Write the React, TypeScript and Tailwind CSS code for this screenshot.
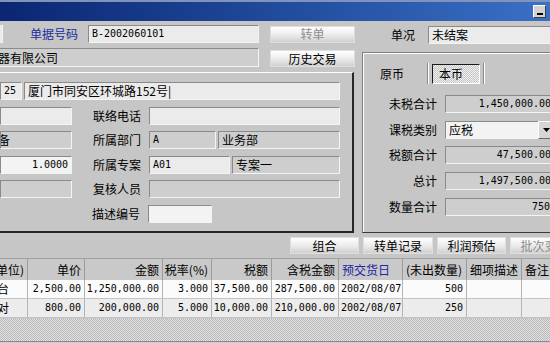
import { FC, ReactNode } from "react";

const MONO = "font-['DejaVu_Sans_Mono','Noto_Sans_CJK_SC',monospace] text-[10px]";

// 输入框颜色
const tones = {
  light: "bg-[#ebebeb]",
  gray: "bg-[#cecece]",
  white: "bg-[#f3f3f3]",
};

type FieldProps = {
  w: string;
  tone?: "light" | "gray" | "white";
  right?: boolean;
  mono?: boolean;
  children?: ReactNode;
};

const Field: FC<FieldProps> = ({ w, tone = "light", right, mono, children }) => (
  <div
    className={`${w} h-[18px] shrink-0 flex items-center overflow-hidden whitespace-nowrap border border-t-[#8a8a8a] border-l-[#8a8a8a] border-b-[#f4f4f4] border-r-[#f4f4f4] ${tones[tone]} ${right ? "justify-end pr-[3px]" : "pl-[3px]"} ${mono ? MONO : ""}`}
  >
    {children}
  </div>
);

const Btn: FC<{ w: string; disabled?: boolean; children: ReactNode }> = ({ w, disabled, children }) => (
  <div
    className={`${w} h-[17px] shrink-0 flex items-center justify-center bg-linear-to-b from-[#ffffff] via-[#ececec] to-[#d0d0d0] border border-[#dedede] ${disabled ? "text-[#8e8e8e]" : "text-black"}`}
  >
    {children}
  </div>
);

const Label: FC<{ w: string; children: ReactNode }> = ({ w, children }) => (
  <div className={`${w} shrink-0 text-right pr-[8px] whitespace-nowrap`}>{children}</div>
);

const cols = [
  { w: "w-[28px]", head: "(单位)", hr: true, br: false },
  { w: "w-[57px]", head: "单价", hr: true, br: true },
  { w: "w-[78px]", head: "金额", hr: true, br: true },
  { w: "w-[49px]", head: "税率(%)", hr: true, br: true },
  { w: "w-[60px]", head: "税额", hr: true, br: true },
  { w: "w-[67px]", head: "含税金额", hr: true, br: true },
  { w: "w-[64px]", head: "预交货日", hr: false, br: false },
  { w: "w-[64px]", head: "(未出数量)", hr: false, br: true },
  { w: "w-[55px]", head: "细项描述", hr: false, br: false },
  { w: "w-[40px]", head: "备注", hr: false, br: false },
];

const rows = [
  ["台", "2,500.00", "1,250,000.00", "3.000", "37,500.00", "287,500.00", "2002/08/07", "500", "", ""],
  ["对", "800.00", "200,000.00", "5.000", "10,000.00", "210,000.00", "2002/08/07", "250", "", ""],
];

export default function App() {
  return (
    <div className="w-[550px] h-[343px] overflow-hidden bg-[#c6c6c6] font-['Noto_Sans_CJK_SC',sans-serif] text-[12px] leading-none text-black flex flex-col">
      {/* 标题栏 */}
      <div className="h-[21px] shrink-0 border-t-2 border-[#8193bb] bg-linear-to-r from-[#0b2672] to-[#3a70c6] flex items-center justify-end pr-[4px]">
        <div className="w-[13px] h-[13px] bg-[#d2d2d2] border border-t-white border-l-white border-b-[#404040] border-r-[#404040] flex items-end pl-[3px] pb-[2px]">
          <div className="w-[6px] h-[2px] bg-black" />
        </div>
      </div>

      <div className="flex mt-[4px] shrink-0">
        {/* 左侧 */}
        <div className="w-[356px] shrink-0 flex flex-col">
          <div className="flex items-center h-[18px]">
            <div className="w-[3px] h-[18px] border-r border-b border-[#f4f4f4] bg-[#ebebeb]" />
            <div className="w-[85px] text-right pr-[10px] text-[#1b2b9e]">单据号码</div>
            <Field w="w-[171px]" mono>B-2002060101</Field>
            <div className="ml-[11px]">
              <Btn w="w-[85px]" disabled>转单</Btn>
            </div>
          </div>
          <div className="flex items-start mt-[5px] h-[19px]">
            <div className="w-[259px] h-[19px] flex items-center overflow-hidden whitespace-nowrap border border-t-[#8a8a8a] border-b-[#f4f4f4] border-r-[#f4f4f4] border-l-0 bg-[#cecece]">
              <span className="-ml-[2px]">器有限公司</span>
            </div>
            <div className="ml-[11px] mt-[2px]">
              <Btn w="w-[85px]">历史交易</Btn>
            </div>
          </div>

          <div className="mt-[5px] h-[161px] w-[354px] border-t border-t-white border-r-2 border-b-2 border-r-[#262626] border-b-[#262626] pt-[9px] flex flex-col gap-[6.6px]">
            <div className="flex items-center h-[18px]">
              <Field w="w-[22px]" mono>25</Field>
              <div className="ml-[2px]">
                <Field w="w-[316px]">厦门市同安区环城路152号|</Field>
              </div>
            </div>
            <div className="flex items-center h-[18px]">
              <Field w="w-[72px]" />
              <Label w="w-[77px]">联络电话</Label>
              <Field w="w-[191px]" />
            </div>
            <div className="flex items-center h-[18px]">
              <Field w="w-[72px]" tone="gray">
                <span className="-ml-[6px]">备</span>
              </Field>
              <Label w="w-[77px]">所属部门</Label>
              <Field w="w-[67px]" tone="gray" mono>A</Field>
              <div className="ml-[2px]">
                <Field w="w-[122px]" tone="gray">业务部</Field>
              </div>
            </div>
            <div className="flex items-center h-[18px]">
              <Field w="w-[72px]" tone="white" right mono>1.0000</Field>
              <Label w="w-[77px]">所属专案</Label>
              <Field w="w-[81px]" mono>A01</Field>
              <div className="ml-[2px]">
                <Field w="w-[108px]" tone="gray">专案一</Field>
              </div>
            </div>
            <div className="flex items-center h-[18px]">
              <Field w="w-[72px]" tone="gray" />
              <Label w="w-[77px]">复核人员</Label>
              <Field w="w-[191px]" tone="gray" />
            </div>
            <div className="flex items-center h-[18px]">
              <div className="w-[72px]" />
              <Label w="w-[76px]">描述编号</Label>
              <Field w="w-[64px]" tone="white" />
            </div>
          </div>
        </div>

        {/* 右侧 */}
        <div className="ml-[6px] w-[200px] shrink-0 flex flex-col">
          <div className="flex items-center h-[18px] mt-[1px]">
            <div className="w-[66px] text-right pr-[13px]">单况</div>
            <Field w="w-[130px]">未结案</Field>
          </div>
          <div className="mt-[8px] h-[181px] border-t border-l border-[#7e7e7e] border-b border-b-[#3a3a3a] shadow-[inset_1px_1px_0_#ffffff] pt-[10px]">
            <div className="flex items-center h-[21px] pl-[17px]">
              <div className="w-[24px]">原币</div>
              <div className="ml-[23px] w-[2px] h-[21px] border-l border-l-[#8a8a8a] border-r border-r-white" />
              <div className="ml-[3px] w-[48px] h-[20px] flex items-center pl-[6px] border border-t-[#1a1a1a] border-l-[#1a1a1a] border-b-white border-r-white bg-[image:repeating-conic-gradient(#c4c4c4_0%_25%,#f2f2f2_0%_50%)] bg-size-[2px_2px]">
                本币
              </div>
              <div className="ml-[3px] w-[2px] h-[21px] border-l border-l-[#8a8a8a] border-r border-r-white" />
            </div>
            <div className="mt-[11px] flex flex-col gap-[7.7px]">
              <div className="flex items-center h-[18px]">
                <Label w="w-[82px]">未税合计</Label>
                <Field w="w-[110px]" tone="gray" right mono>1,450,000.00</Field>
              </div>
              <div className="flex items-center h-[18px]">
                <Label w="w-[82px]">课税类别</Label>
                <div className="w-[93px] h-[18px] flex items-center pl-[3px] border border-t-[#8a8a8a] border-l-[#8a8a8a] border-b-[#f4f4f4] border-r-0 bg-[#f3f3f3]">
                  应税
                </div>
                <div className="w-[17px] h-[18px] flex items-center justify-center bg-[#d6d6d6] border border-t-white border-l-white border-b-[#6a6a6a] border-r-[#6a6a6a]">
                  <svg width="7" height="4" viewBox="0 0 7 4">
                    <path d="M0 0h7L3.5 4z" fill="#000" />
                  </svg>
                </div>
              </div>
              <div className="flex items-center h-[18px]">
                <Label w="w-[82px]">税额合计</Label>
                <Field w="w-[110px]" tone="gray" right mono>47,500.00</Field>
              </div>
              <div className="flex items-center h-[18px]">
                <Label w="w-[82px]">总计</Label>
                <Field w="w-[110px]" tone="gray" right mono>1,497,500.00</Field>
              </div>
              <div className="flex items-center h-[18px]">
                <Label w="w-[82px]">数量合计</Label>
                <Field w="w-[109px]" tone="gray" right mono>750</Field>
              </div>
            </div>
          </div>
        </div>
      </div>

      {/* 按钮 */}
      <div className="flex gap-[4px] pl-[290px] mt-[4px] shrink-0">
        <Btn w="w-[69px]">组合</Btn>
        <Btn w="w-[70px]">转单记录</Btn>
        <Btn w="w-[69px]">利润预估</Btn>
        <Btn w="w-[69px]" disabled>批次变更</Btn>
      </div>

      {/* 明细 */}
      <div className="mt-[4px] flex flex-col flex-1 w-[600px]">
        <div className="flex h-[22px] shrink-0 border-t border-[#a0a0a0] bg-[#c9c9c9]">
          {cols.map((c, i) => (
            <div
              key={i}
              className={`${c.w} shrink-0 h-full flex items-center overflow-hidden whitespace-nowrap border-r border-r-[#9a9a9a] ${c.hr ? "justify-end pr-[3px]" : "pl-[3px]"} ${i === 6 ? "text-[#2323a6]" : ""}`}
            >
              {c.head}
            </div>
          ))}
        </div>
        {rows.map((r, ri) => (
          <div key={ri} className={`flex h-[19px] shrink-0 border-b border-[#c4c4c4] ${ri === 0 ? "bg-[#fbfbfb]" : "bg-[#ececec]"}`}>
            {r.map((v, ci) => (
              <div
                key={ci}
                className={`${cols[ci].w} shrink-0 h-full flex items-center overflow-hidden whitespace-nowrap border-r border-r-[#b4b4b4] ${ci === 0 ? "" : MONO} ${ci === 0 ? "pl-0" : cols[ci].br ? "justify-end pr-[3px]" : "pl-[2px]"}`}
              >
                {ci === 0 ? <span className="-ml-[3px]">{v}</span> : v}
              </div>
            ))}
          </div>
        ))}
        <div className="h-[22px] shrink-0 mt-[1px] bg-[image:repeating-conic-gradient(#b8b8b8_0%_25%,#e2e2e2_0%_50%)] bg-size-[2px_2px]" />
        <div className="flex-1 border-t border-[#8a8a8a] bg-[#cfcfcf]" />
      </div>
    </div>
  );
}
